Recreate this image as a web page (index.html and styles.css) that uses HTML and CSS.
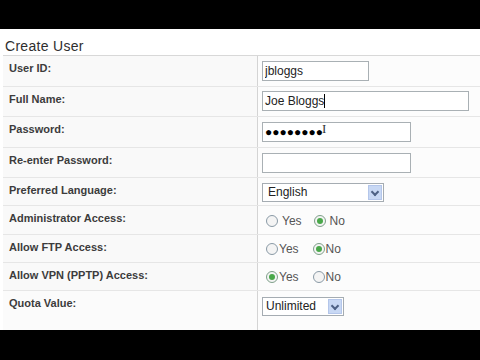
FILE: index.html
```html
<!DOCTYPE html>
<html lang="en">
<head>
    <meta charset="UTF-8">
    <title>Create User</title>
    <link rel="stylesheet" href="styles.css">
</head>
<body>
    <div class="page">
        <h2 class="title">Create User</h2>

        <div class="form">
            <div class="row">
                <div class="label">User ID:</div>
                <div class="field"><input type="text" class="text short" value="jbloggs"></div>
            </div>
            <div class="row even">
                <div class="label">Full Name:</div>
                <div class="field"><div class="text long">Joe Bloggs<span class="caret"></span></div></div>
            </div>
            <div class="row">
                <div class="label">Password:</div>
                <div class="field"><div class="text mid dots">&#9679;&#9679;&#9679;&#9679;&#9679;&#9679;&#9679;&#9679;<span class="ibeam">I</span></div></div>
            </div>
            <div class="row even">
                <div class="label">Re-enter Password:</div>
                <div class="field"><div class="text mid"></div></div>
            </div>
            <div class="row small">
                <div class="label">Preferred Language:</div>
                <div class="field"><div class="select lang">English<span class="drop"></span></div></div>
            </div>
            <div class="row small odd">
                <div class="label">Administrator Access:</div>
                <div class="field radios spaced">
                    <span class="radio"></span><span class="opt">Yes</span>
                    <span class="radio on"></span><span class="opt">No</span>
                </div>
            </div>
            <div class="row small">
                <div class="label">Allow FTP Access:</div>
                <div class="field radios">
                    <span class="radio"></span><span class="opt">Yes</span>
                    <span class="radio on"></span><span class="opt">No</span>
                </div>
            </div>
            <div class="row small">
                <div class="label">Allow VPN (PPTP) Access:</div>
                <div class="field radios">
                    <span class="radio on"></span><span class="opt">Yes</span>
                    <span class="radio"></span><span class="opt">No</span>
                </div>
            </div>
            <div class="row last">
                <div class="label">Quota Value:</div>
                <div class="field"><div class="select quota">Unlimited<span class="drop"></span></div></div>
            </div>
        </div>
    </div>
</body>
</html>
```

FILE: styles.css
```css
* {
    margin: 0;
    padding: 0;
    box-sizing: border-box;
}
body {
    background-color: #000;
    font-family: 'Liberation Sans', Arial, sans-serif;
    width: 480px;
    height: 360px;
    overflow: hidden;
}
.page {
    margin-top: 29px;
    height: 301px;
    background-color: #fff;
    padding-left: 3px;
    display: flex;
    flex-direction: column;
}
.title {
    height: 27px;
    padding: 9px 0 0 2px;
    font-size: 14px;
    font-weight: normal;
    color: #2e2e2e;
    letter-spacing: 0.3px;
    border-bottom: 1px solid #d8d8d8;
    line-height: 16px;
}
.form {
    flex: 1;
    display: flex;
    flex-direction: column;
}
.row {
    display: grid;
    grid-template-columns: 254px 1fr;
    height: 31px;
    background-color: #f9f9f9;
    border-bottom: 1px solid #e6e6e6;
}
.row.even {
    height: 30px;
}
.row.small {
    height: 28px;
}
.row.small.odd {
    height: 29px;
}
.row.last {
    flex: 1;
    border-bottom: none;
    background-color: #fbfbfb;
}
.label {
    padding: 6px 0 0 6px;
    font-size: 11px;
    font-weight: bold;
    color: #3c3c3c;
    line-height: 13px;
}
.field {
    border-left: 1px solid #d4d4d4;
    padding: 4px 0 0 4px;
    background-color: #fcfcfc;
}
.text {
    display: block;
    height: 20px;
    border: 1px solid #a9b0b4;
    background-color: #fff;
    font-family: 'Liberation Sans', Arial, sans-serif;
    font-size: 12px;
    color: #222;
    padding: 0 2px;
    line-height: 18px;
    position: relative;
}
input.text {
    outline: none;
}
.text.short {
    width: 107px;
    margin-top: 1px;
}
.text.long {
    width: 207px;
}
.text.mid {
    width: 149px;
    margin-top: 1px;
}
.dots {
    font-size: 12px;
    letter-spacing: 0;
    color: #000;
}
.caret {
    display: inline-block;
    width: 1px;
    height: 14px;
    background-color: #000;
    vertical-align: -3px;
}
.ibeam {
    position: absolute;
    left: 59px;
    top: -3px;
    font-size: 13px;
    font-family: 'Liberation Serif', serif;
    color: #333;
    letter-spacing: 0;
}
.select {
    position: relative;
    height: 19px;
    border: 1px solid #a5acb2;
    background-color: #fff;
    font-size: 12px;
    color: #222;
    line-height: 17px;
    padding-left: 5px;
}
.select.lang {
    width: 122px;
    margin-top: 1px;
}
.select.quota {
    width: 82px;
    padding-left: 3px;
    margin-top: 2px;
}
.drop {
    position: absolute;
    right: 1px;
    top: 1px;
    width: 14px;
    height: 15px;
    background-color: #c8d8f4;
    border: 1px solid #b4c6ea;
}
.drop::after {
    content: "";
    position: absolute;
    left: 3px;
    top: 3px;
    width: 4px;
    height: 4px;
    border-right: 2px solid #4d6185;
    border-bottom: 2px solid #4d6185;
    transform: rotate(45deg);
}
.radios {
    display: flex;
    align-items: center;
    padding: 1px 0 0 8px;
    font-size: 12px;
    color: #555;
}
.radios.spaced .opt {
    margin-left: 4px;
}
.radio {
    width: 12px;
    height: 12px;
    border: 1px solid #8a9aa6;
    border-radius: 50%;
    background-color: #f4f4f4;
    position: relative;
}
.radio.on::after {
    content: "";
    position: absolute;
    left: 2px;
    top: 2px;
    width: 6px;
    height: 6px;
    border-radius: 50%;
    background-color: #4aa84a;
}
.radio.on {
    border-color: #7fa08a;
}
.opt {
    margin-left: 1px;
    margin-right: 14px;
}
.radios.spaced .radio + .opt {
    margin-right: 12px;
}
```
